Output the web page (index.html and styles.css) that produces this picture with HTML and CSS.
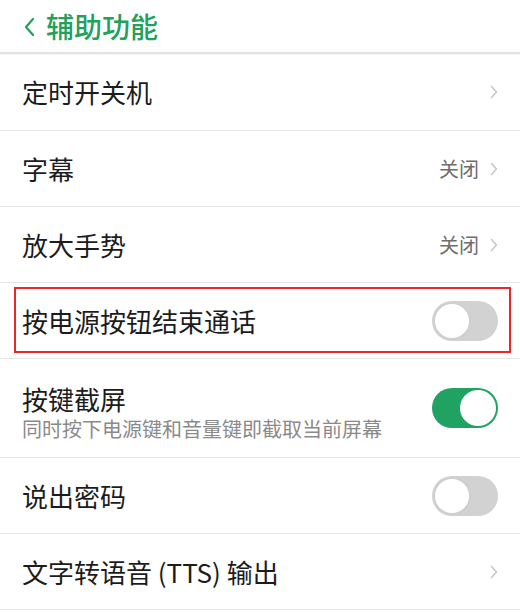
FILE: index.html
```html
<!DOCTYPE html>
<html lang="zh-CN">
<head>
<meta charset="utf-8">
<title>辅助功能</title>
<link rel="stylesheet" href="styles.css">
</head>
<body>
<div class="page">
  <header class="header">
    <svg class="back" width="12" height="20" viewBox="0 0 12 20"><path d="M10 2 L3 10 L10 18" fill="none" stroke="#22a05c" stroke-width="2.2" stroke-linecap="round" stroke-linejoin="round"/></svg>
    <span class="title">辅助功能</span>
  </header>
  <div class="list">
    <div class="row first">
      <span class="label">定时开关机</span>
      <span class="right"><svg class="chev" width="8" height="14" viewBox="0 0 8 14"><path d="M1.5 1.5 L6.5 7 L1.5 12.5" fill="none" stroke="#c4c4c4" stroke-width="1.4" stroke-linecap="round" stroke-linejoin="round"/></svg></span>
    </div>
    <div class="row">
      <span class="label">字幕</span>
      <span class="right"><span class="value">关闭</span><svg class="chev" width="8" height="14" viewBox="0 0 8 14"><path d="M1.5 1.5 L6.5 7 L1.5 12.5" fill="none" stroke="#c4c4c4" stroke-width="1.4" stroke-linecap="round" stroke-linejoin="round"/></svg></span>
    </div>
    <div class="row">
      <span class="label">放大手势</span>
      <span class="right"><span class="value">关闭</span><svg class="chev" width="8" height="14" viewBox="0 0 8 14"><path d="M1.5 1.5 L6.5 7 L1.5 12.5" fill="none" stroke="#c4c4c4" stroke-width="1.4" stroke-linecap="round" stroke-linejoin="round"/></svg></span>
    </div>
    <div class="row highlighted">
      <span class="label">按电源按钮结束通话</span>
      <span class="toggle off"><span class="knob"></span></span>
      <span class="mark"></span>
    </div>
    <div class="row tall">
      <span class="texts">
        <span class="label">按键截屏</span>
        <span class="sub">同时按下电源键和音量键即截取当前屏幕</span>
      </span>
      <span class="toggle on"><span class="knob"></span></span>
    </div>
    <div class="row">
      <span class="label">说出密码</span>
      <span class="toggle off"><span class="knob"></span></span>
    </div>
    <div class="row">
      <span class="label">文字转语音 (TTS) 输出</span>
      <span class="right"><svg class="chev" width="8" height="14" viewBox="0 0 8 14"><path d="M1.5 1.5 L6.5 7 L1.5 12.5" fill="none" stroke="#c4c4c4" stroke-width="1.4" stroke-linecap="round" stroke-linejoin="round"/></svg></span>
    </div>
  </div>
</div>
</body>
</html>
```
FILE: styles.css
```css
html, body {
  margin: 0;
  padding: 0;
  background: #ffffff;
}
body {
  font-family: "Noto Sans CJK SC", "Noto Sans", sans-serif;
  color: #1c1c1c;
  width: 520px;
  height: 612px;
  overflow: hidden;
}
.header {
  height: 52px;
  display: flex;
  align-items: center;
  padding-left: 23px;
  gap: 11px;
  border-bottom: 2px solid #e3e3e3;
  box-shadow: 0 1px 1px rgba(0,0,0,0.04);
}
.back {
  display: block;
  margin-top: 2px;
}
.title {
  font-size: 28px;
  line-height: 36px;
  color: #22a05c;
  font-weight: 500;
}
.list {
  display: flex;
  flex-direction: column;
}
.row {
  position: relative;
  height: 75px;
  display: flex;
  align-items: center;
  justify-content: space-between;
  padding: 0 22px;
  border-bottom: 1px solid #e6e6e6;
}
.row.first {
  height: 76px;
}
.row.tall {
  height: 98px;
  align-items: stretch;
}
.label {
  font-size: 26px;
  line-height: 30px;
  color: #1c1c1c;
}
.texts {
  display: flex;
  flex-direction: column;
  padding-top: 25px;
}
.sub {
  font-size: 20px;
  line-height: 24px;
  margin-top: 3px;
  color: #8a8a8a;
}
.row.tall .toggle {
  align-self: center;
}
.right {
  display: flex;
  align-items: center;
  gap: 11px;
}
.value {
  font-size: 20px;
  line-height: 28px;
  color: #6e6e6e;
}
.chev {
  display: block;
}
.toggle {
  width: 66px;
  height: 40px;
  border-radius: 20px;
  display: flex;
  align-items: center;
  box-sizing: border-box;
  padding: 1px;
}
.toggle.off {
  background: #d2d2d2;
  justify-content: flex-start;
}
.toggle.on {
  background: #20a262;
  justify-content: flex-end;
  padding: 2px;
}
.knob {
  width: 38px;
  height: 38px;
  border-radius: 50%;
  background: #ffffff;
  box-sizing: border-box;
}
.toggle.off .knob {
  border: 2px solid #cfcfcf;
}
.toggle.on .knob {
  width: 36px;
  height: 36px;
}
.mark {
  position: absolute;
  left: 14px;
  right: 9px;
  top: 4px;
  bottom: 5px;
  border: 2px solid #e8262b;
  pointer-events: none;
}
```
